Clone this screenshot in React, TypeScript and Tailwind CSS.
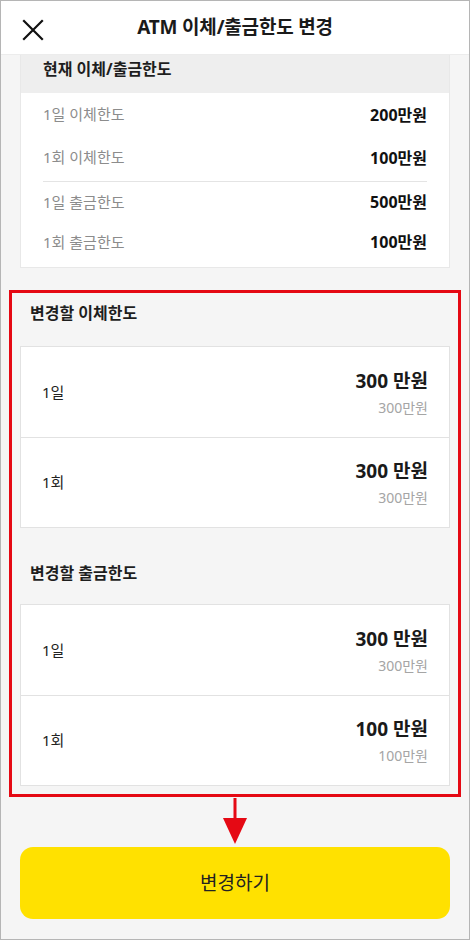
const font = {
  fontFamily: '"Noto Sans", "Noto Sans CJK KR", sans-serif',
};

type Limit = { label: string; value: string };

const transferNow: Limit[] = [
  { label: "1일 이체한도", value: "200만원" },
  { label: "1회 이체한도", value: "100만원" },
];

const withdrawNow: Limit[] = [
  { label: "1일 출금한도", value: "500만원" },
  { label: "1회 출금한도", value: "100만원" },
];

function CloseIcon() {
  return (
    <svg width="22" height="22" viewBox="0 0 22 22" fill="none">
      <path d="M2 2L20 20M20 2L2 20" stroke="#111" strokeWidth="2.2" strokeLinecap="square" />
    </svg>
  );
}

function ChangeCard({ rows }: { rows: { label: string; big: string; small: string }[] }) {
  return (
    <div className="bg-white border border-[#e2e2e2]">
      {rows.map((r, i) => (
        <div
          key={r.label}
          className={`flex h-[90px] items-center justify-between pl-[21px] pr-[21px] ${
            i > 0 ? "border-t border-[#e2e2e2]" : ""
          }`}
        >
          <span className="text-[15px] text-[#222]">{r.label}</span>
          <div className="flex flex-col items-end">
            <span className="text-[19px] leading-[26px] font-bold text-[#1a1a1a]">{r.big}</span>
            <span className="mt-[4px] text-[14px] leading-[19px] text-[#a5a5a5]">{r.small}</span>
          </div>
        </div>
      ))}
    </div>
  );
}

export default function App() {
  return (
    <div
      style={font}
      className="w-[470px] h-[940px] box-border border border-[#b5b5b5] bg-[#f5f5f5] flex flex-col overflow-hidden"
    >
      {/* header */}
      <header className="relative h-[54px] shrink-0 bg-white flex items-center justify-center border-b border-[#ececec] z-10">
        <button className="absolute left-[21px] top-[18px]">
          <CloseIcon />
        </button>
        <h1 className="text-[19px] font-bold text-[#1a1a1a] tracking-[-0.2px]">ATM 이체/출금한도 변경</h1>
      </header>

      {/* current limits */}
      <div className="mx-[19px] bg-white border border-t-0 border-[#e8e8e8]">
        <div className="h-[38px] bg-[#eeeeee] pl-[22px] pt-[2px]">
          <span className="text-[16px] leading-[20px] font-bold text-[#1e1e1e]">현재 이체/출금한도</span>
        </div>
        <div className="px-[22px]">
          {transferNow.map((r) => (
            <div key={r.label} className="flex h-[43px] items-center justify-between">
              <span className="text-[15px] text-[#8c8c8c]">{r.label}</span>
              <span className="text-[16px] font-bold text-[#111]">{r.value}</span>
            </div>
          ))}
          <div className="mt-[2px] h-px bg-[#e4e4e4]" />
          {withdrawNow.map((r) => (
            <div key={r.label} className="flex h-[40px] items-center justify-between">
              <span className="text-[15px] text-[#8c8c8c]">{r.label}</span>
              <span className="text-[16px] font-bold text-[#111]">{r.value}</span>
            </div>
          ))}
          <div className="h-[5px]" />
        </div>
      </div>

      {/* highlighted new limits */}
      <div className="mx-[8px] mt-[22px] border-[3px] border-[#e50914] px-[8px] pt-[10px] pb-[8px]">
        <h2 className="pl-[10px] text-[16px] leading-[20px] font-bold text-[#1e1e1e]">변경할 이체한도</h2>
        <div className="mt-[23px]">
          <ChangeCard
            rows={[
              { label: "1일", big: "300 만원", small: "300만원" },
              { label: "1회", big: "300 만원", small: "300만원" },
            ]}
          />
        </div>
        <h2 className="mt-[35px] pl-[10px] text-[16px] leading-[20px] font-bold text-[#1e1e1e]">변경할 출금한도</h2>
        <div className="mt-[21px]">
          <ChangeCard
            rows={[
              { label: "1일", big: "300 만원", small: "300만원" },
              { label: "1회", big: "100 만원", small: "100만원" },
            ]}
          />
        </div>
      </div>

      {/* arrow */}
      <div className="flex justify-center h-[50px]">
        <svg width="30" height="50" viewBox="0 0 30 50">
          <rect x="13.5" y="1" width="3" height="26" fill="#e50914" />
          <polygon points="3,21 27,21 15,47" fill="#e50914" />
        </svg>
      </div>

      <div className="px-[19px]">
        <button className="w-full h-[72px] rounded-[13px] bg-[#ffe100] text-[19px] text-[#222]">
          변경하기
        </button>
      </div>
    </div>
  );
}
